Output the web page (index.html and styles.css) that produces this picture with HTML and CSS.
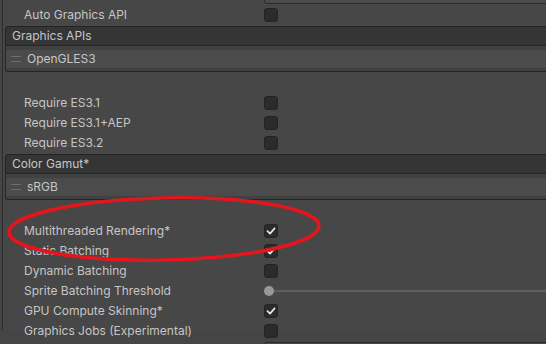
FILE: index.html
```html
<!DOCTYPE html>
<html>
<head>
<meta charset="utf-8">
<link rel="stylesheet" href="styles.css">
</head>
<body>
<div class="inspector">
  <div class="row row-top">
    <span class="label"></span>
    <span class="field"></span>
  </div>
  <div class="row">
    <span class="label">Auto Graphics API</span>
    <span class="checkbox"></span>
  </div>
  <div class="rlist">
    <div class="rlist-header">Graphics APIs</div>
    <div class="rlist-body">
      <div class="rlist-item"><span class="handle"></span>OpenGLES3</div>
    </div>
  </div>
  <div class="row">
    <span class="label">Require ES3.1</span>
    <span class="checkbox"></span>
  </div>
  <div class="row">
    <span class="label">Require ES3.1+AEP</span>
    <span class="checkbox"></span>
  </div>
  <div class="row">
    <span class="label">Require ES3.2</span>
    <span class="checkbox"></span>
  </div>
  <div class="rlist">
    <div class="rlist-header">Color Gamut*</div>
    <div class="rlist-body">
      <div class="rlist-item"><span class="handle"></span>sRGB</div>
    </div>
  </div>
  <div class="row">
    <span class="label">Multithreaded Rendering*</span>
    <span class="checkbox checked"><svg viewBox="0 0 14 14" width="14" height="14"><path d="M3.5 7.2 L6 9.6 L10.6 4.4" fill="none" stroke="#e8e8e8" stroke-width="1.7" stroke-linecap="round" stroke-linejoin="round"/></svg></span>
  </div>
  <div class="row">
    <span class="label">Static Batching</span>
    <span class="checkbox checked"><svg viewBox="0 0 14 14" width="14" height="14"><path d="M3.5 7.2 L6 9.6 L10.6 4.4" fill="none" stroke="#e8e8e8" stroke-width="1.7" stroke-linecap="round" stroke-linejoin="round"/></svg></span>
  </div>
  <div class="row">
    <span class="label">Dynamic Batching</span>
    <span class="checkbox"></span>
  </div>
  <div class="row">
    <span class="label">Sprite Batching Threshold</span>
    <span class="slider"><span class="knob"></span><span class="track"></span></span>
  </div>
  <div class="row">
    <span class="label">GPU Compute Skinning*</span>
    <span class="checkbox checked"><svg viewBox="0 0 14 14" width="14" height="14"><path d="M3.5 7.2 L6 9.6 L10.6 4.4" fill="none" stroke="#e8e8e8" stroke-width="1.7" stroke-linecap="round" stroke-linejoin="round"/></svg></span>
  </div>
  <div class="row">
    <span class="label">Graphics Jobs (Experimental)</span>
    <span class="checkbox"></span>
  </div>
  <div class="row">
    <span class="label"></span>
    <span class="field"></span>
  </div>
</div>
<svg class="annotation" width="546" height="344" viewBox="0 0 546 344">
  <ellipse cx="164" cy="229" rx="155" ry="31" transform="rotate(-1.2 164 229)" fill="none" stroke="#e2161c" stroke-width="3.6"/>
</svg>
</body>
</html>
```

FILE: styles.css
```css
html, body {
  margin: 0;
  padding: 0;
  width: 546px;
  height: 344px;
  overflow: hidden;
  background: #454545;
}

body {
  position: relative;
  font-family: Inter, "Noto Sans", sans-serif;
  font-size: 12px;
  color: #c6c6c6;
}

.inspector {
  margin-left: 2px;
  border-left: 1px solid #2c2c2c;
  padding-left: 2px;
  height: 344px;
  background: #474747;
}

.row {
  display: flex;
  align-items: center;
  height: 18px;
  margin-bottom: 2px;
  white-space: nowrap;
}

.row-top {
  margin-top: -14px;
}

.label {
  flex: 0 0 259px;
  box-sizing: border-box;
  padding-left: 19px;
  line-height: 18px;
}

.checkbox {
  width: 14px;
  height: 14px;
  box-sizing: border-box;
  border: 1px solid #232323;
  border-radius: 3px;
  background: #2b2b2b;
  display: flex;
  align-items: center;
  justify-content: center;
}

.checkbox svg {
  display: block;
  margin: -1px;
}

.field {
  flex: 1 0 auto;
  height: 18px;
  box-sizing: border-box;
  border: 1px solid #2a2a2a;
  border-radius: 3px;
  background: #4b4b4b;
  margin-right: -10px;
}

.rlist {
  margin-right: -10px;
  margin-bottom: 22px;
}

.rlist-header {
  height: 20px;
  box-sizing: border-box;
  border: 1px solid #242424;
  border-top-left-radius: 3px;
  background: #353535;
  padding-left: 6px;
  line-height: 18px;
}

.rlist-body {
  height: 26px;
  box-sizing: border-box;
  border: 1px solid #242424;
  border-top: none;
  border-bottom-left-radius: 3px;
  background: #414141;
  padding-top: 4px;
}

.rlist-item {
  height: 18px;
  background: #4b4b4b;
  display: flex;
  align-items: center;
  line-height: 18px;
}

.handle {
  width: 10px;
  height: 4px;
  margin-left: 5px;
  margin-right: 6px;
  border-top: 1px solid #6e6e6e;
  border-bottom: 1px solid #6e6e6e;
}

.slider {
  flex: 1 0 auto;
  display: flex;
  align-items: center;
  height: 18px;
}

.knob {
  width: 10px;
  height: 10px;
  border-radius: 50%;
  background: #999999;
  flex: 0 0 10px;
}

.track {
  flex: 1 1 auto;
  height: 2px;
  background: #5e5e5e;
}

.annotation {
  position: absolute;
  left: 0;
  top: 0;
  pointer-events: none;
}
```
